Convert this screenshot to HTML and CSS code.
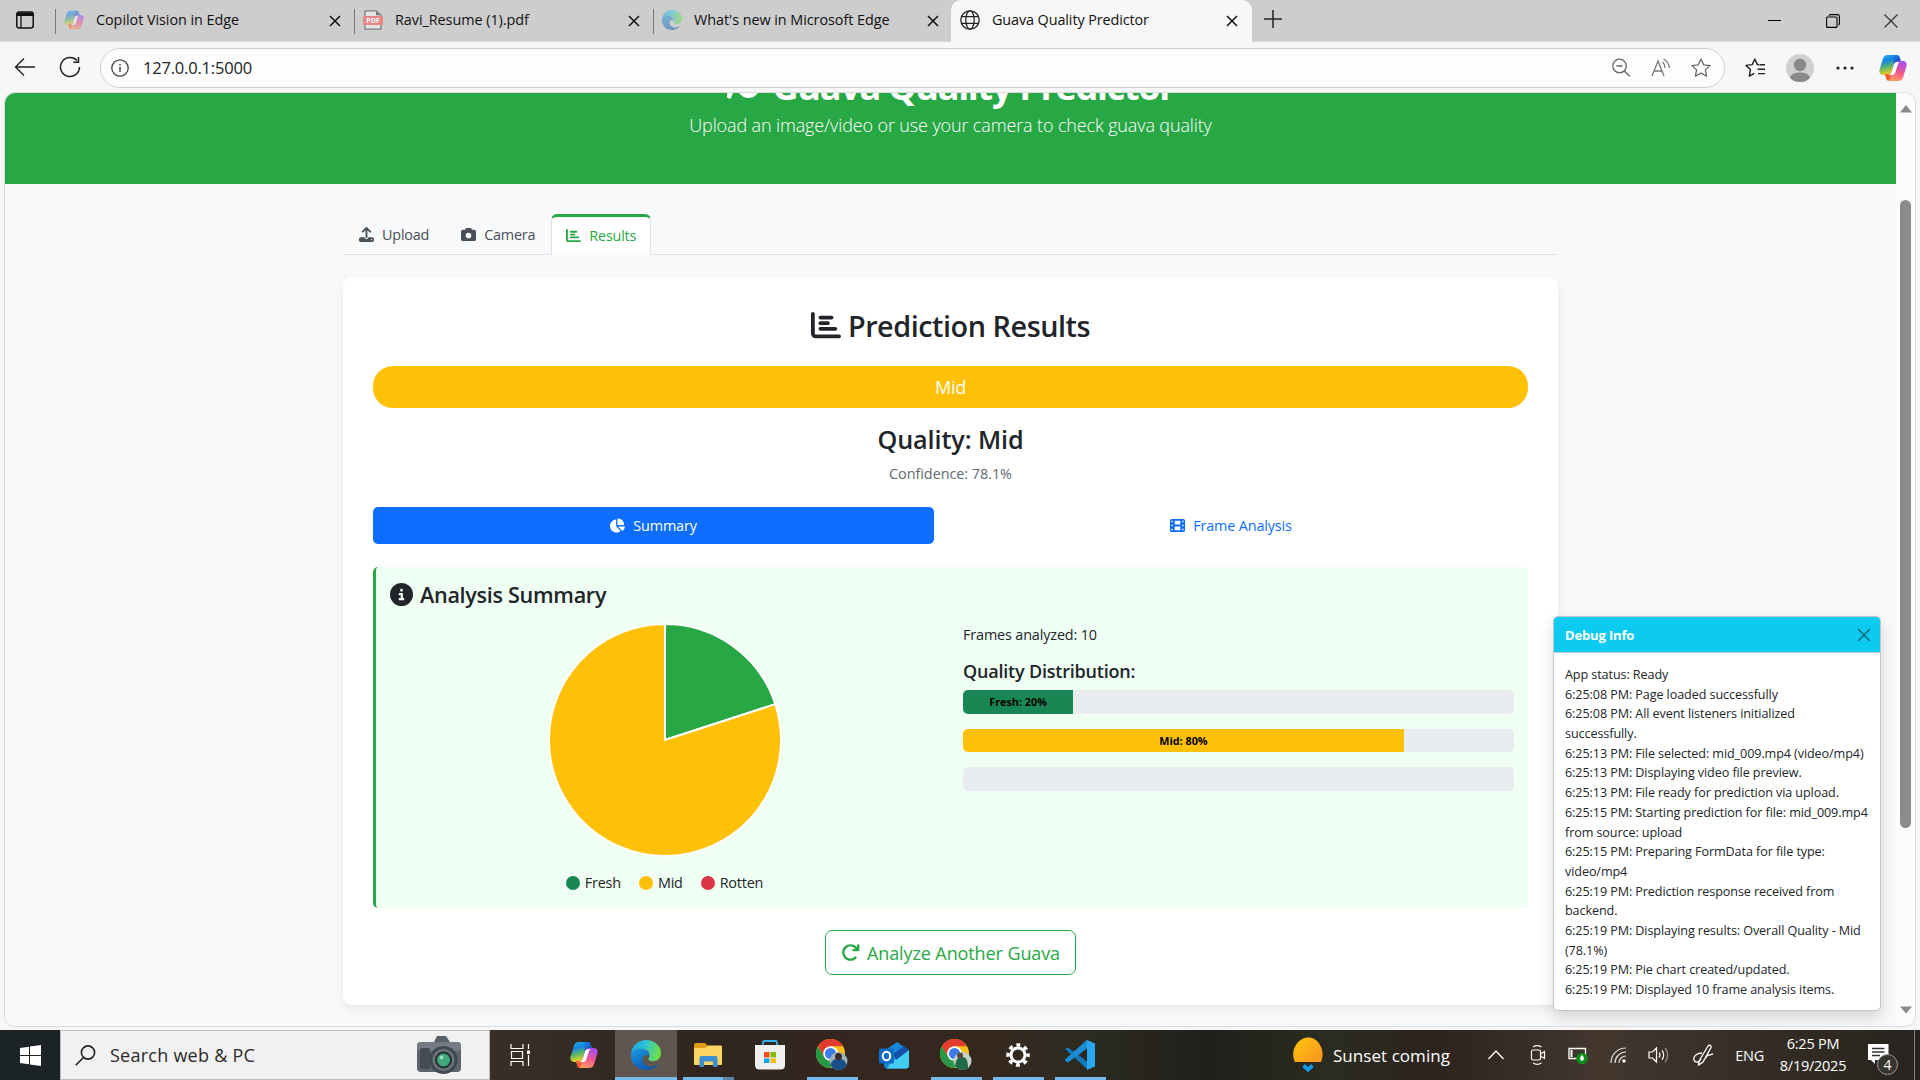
FILE: index.html
```html
<!DOCTYPE html>
<html lang="en">
<head>
<meta charset="utf-8">
<title>Guava Quality Predictor</title>
<link rel="stylesheet" href="styles.css">
</head>
<body>
<svg class="defs" width="0" height="0">
  <defs>
    <linearGradient id="cpA" x1="0" y1="0" x2="0.3" y2="1"><stop offset="0" stop-color="#22b4f0"/><stop offset=".35" stop-color="#1584e0"/><stop offset=".65" stop-color="#5fb86a"/><stop offset="1" stop-color="#f6d21c"/></linearGradient>
    <linearGradient id="cpB" x1="0.6" y1="0" x2="0.3" y2="1"><stop offset="0" stop-color="#a64df2"/><stop offset=".5" stop-color="#ee5590"/><stop offset="1" stop-color="#ffa35c"/></linearGradient>
    <linearGradient id="cpC" x1="0" y1="0" x2="1" y2="1"><stop offset="0" stop-color="#1d8be8"/><stop offset="1" stop-color="#1438b8"/></linearGradient>
    <linearGradient id="edA" x1="0" y1="0" x2="1" y2="0.2"><stop offset="0" stop-color="#1c9fe0"/><stop offset=".5" stop-color="#2fc3d8"/><stop offset="1" stop-color="#6be04c"/></linearGradient>
    <linearGradient id="edB" x1="0" y1="0" x2="0.6" y2="1"><stop offset="0" stop-color="#1b9de2"/><stop offset="1" stop-color="#0f56ad"/></linearGradient>
    <linearGradient id="sun" x1="0" y1="0" x2="1" y2="1"><stop offset="0" stop-color="#ffc60a"/><stop offset="1" stop-color="#f79420"/></linearGradient>
    <symbol id="copilot" viewBox="0 0 28 28">
      <path d="M9 1h8.500c2 0 2.700 1 3.300 2.800L22 8h-3c-2.500 0-3.600 1.200-4.200 3.200l-2 6.600c-.7 2-1.800 3.200-4.300 3.200H4.500C1 21-.2 18.500.6 15.500L4 4.500C4.800 2 6.400 1 9 1z" fill="url(#cpA)"/>
      <path d="M14 1h3.500c2 0 2.700 1 3.300 2.800L22 8h-3c-2.500 0-3.600 1.200-4.200 3.200z" fill="url(#cpC)"/>
      <path d="M19 27h-8.500c-2 0-2.700-1-3.300-2.800L6 20h3c2.500 0 3.600-1.200 4.200-3.200l2-6.600C15.900 8.200 17 7 19.500 7h4c3.500 0 4.700 2.500 3.900 5.500L24 23.500c-.8 2.500-2.400 3.500-5 3.500z" fill="url(#cpB)"/>
      <path d="M6 20h3c2.500 0 3.600-1.200 4.200-3.200L11 24.500c-.5 1.500-1 2.500-2.300 2.100-.8-.5-1.200-1.200-1.500-2.400z" fill="#f5602e"/>
      <path d="M14.800 11.200C15.400 9.200 16.500 8 19 8h1.500c-1 1-1.500 2-2 3.500L16.300 18.500C15.600 20.500 14.500 21 12 21H8.500c2.300 0 3.300-1.200 4.300-3.200z" fill="#fff"/>
    </symbol>
    <symbol id="edge" viewBox="0 0 30 30">
      <path d="M0 14C1 5 7.500 0 15 0c8.500 0 15 6 15 13 0 5-3.600 8.200-8 8.200-3 0-5-1.200-4.600-2.400 2.600-3.200 1-9.300-5.600-9.800C6 8.600 2 11 0 14z" fill="url(#edA)"/>
      <path d="M0 15C.5 10 5 8 10.500 8.500c5 .5 7.800 4 7.200 8-2-2.300-5.700-1.600-6.200 2-.5 4.500 4 8.500 9 8 3.500-.3 5.500-2 6.500-2C24 28.500 19.500 30 15 30 6 30-.4 23 0 15z" fill="url(#edB)"/>
    </symbol>
    <symbol id="bars" viewBox="0 0 512 512"><path fill="currentColor" d="M32 32c17.700 0 32 14.300 32 32V400c0 8.800 7.200 16 16 16H480c17.700 0 32 14.300 32 32s-14.300 32-32 32H80c-44.200 0-80-35.800-80-80V64C0 46.300 14.300 32 32 32zm96 96c0-17.700 14.300-32 32-32l192 0c17.700 0 32 14.300 32 32s-14.300 32-32 32l-192 0c-17.700 0-32-14.300-32-32zm32 64H288c17.700 0 32 14.300 32 32s-14.300 32-32 32H160c-17.700 0-32-14.300-32-32s14.300-32 32-32zm0 96H416c17.700 0 32 14.300 32 32s-14.300 32-32 32H160c-17.700 0-32-14.300-32-32s14.300-32 32-32z"/></symbol>
    <symbol id="closeTab" viewBox="0 0 12 12"><path d="M1 1l10 10M11 1L1 11" stroke="#111" stroke-width="1.500" fill="none"/></symbol>
    <symbol id="chrome" viewBox="0 0 30 30">
      <circle cx="15" cy="15" r="15" fill="#fbc116"/>
      <path d="M2 7.500A15 15 0 0 1 28 7.500H15L8.500 18.700z" fill="#e33b2e"/>
      <path d="M2 7.500A15 15 0 0 0 15 30l6.500-11.300H8.500z" fill="#279847"/>
      <circle cx="15" cy="15" r="7.500" fill="#fff"/><circle cx="15" cy="15" r="5.800" fill="#3b7ded"/>
    </symbol>
  </defs>
</svg>
<div class="screen">
  <div class="tabstrip">
    <svg class="tabmenu" width="18" height="18" viewBox="0 0 18 18"><rect x=".8" y="1" width="16.400" height="16" rx="2.500" fill="none" stroke="#111" stroke-width="1.500"/><path d="M1 1.500h16V5H1z" fill="#111"/><path d="M5 5v12" stroke="#111" stroke-width="1.300"/></svg>
    <div class="tab first"><svg class="fav faded" width="20" height="20"><use href="#copilot"/></svg><span class="t">Copilot Vision in Edge</span><svg class="x" width="12" height="12"><use href="#closeTab"/></svg></div>
    <div class="tab"><svg class="fav" width="20" height="20" viewBox="0 0 20 20"><path d="M2 .8h11l5 4.500v13.900H2z" fill="#e4e4e4" stroke="#7c7c7c" stroke-width="1.300"/><path d="M13 .8v4.500h5z" fill="#777"/><rect x="0" y="6" width="20" height="9" rx="1" fill="#e78888"/><text x="10" y="13" class="pdf">PDF</text></svg><span class="t">Ravi_Resume (1).pdf</span><svg class="x" width="12" height="12"><use href="#closeTab"/></svg></div>
    <div class="tab"><svg class="fav faded" width="20" height="20"><use href="#edge"/></svg><span class="t">What's new in Microsoft Edge</span><svg class="x" width="12" height="12"><use href="#closeTab"/></svg></div>
    <div class="tab active"><svg class="fav" width="20" height="20" viewBox="0 0 20 20" fill="none" stroke="#222" stroke-width="1.300"><circle cx="10" cy="10" r="9.200"/><ellipse cx="10" cy="10" rx="4.200" ry="9.200"/><path d="M1.500 6.700h17M1.500 13.300h17"/></svg><span class="t">Guava Quality Predictor</span><svg class="x" width="12" height="12"><use href="#closeTab"/></svg></div>
    <svg class="plus" width="18" height="18" viewBox="0 0 18 18"><path d="M9 0v18M0 9h18" stroke="#222" stroke-width="1.500"/></svg>
    <div class="wincontrols">
      <svg width="14" height="14" viewBox="0 0 14 14"><path d="M0 6.500h13" stroke="#000"/></svg>
      <svg width="14" height="14" viewBox="0 0 14 14" fill="none" stroke="#000" stroke-width="1.100"><rect x=".6" y="3" width="10.400" height="10.400" rx="1"/><path d="M3 1.800C3 1 3.500.6 4.500.6h7c1.300 0 1.900.6 1.900 1.900v7c0 1-.4 1.500-1.200 1.500"/></svg>
      <svg width="14" height="14" viewBox="0 0 14 14"><path d="M.5.500l13 13M13.500.500l-13 13" stroke="#333" stroke-width="1.200"/></svg>
    </div>
  </div>
  <div class="toolbar">
    <svg class="back" width="22" height="20" viewBox="0 0 22 20" fill="none" stroke="#222" stroke-width="1.400"><path d="M21 10H1.500M10 1.500 1.500 10l8.500 8.500"/></svg>
    <svg class="reload" width="22" height="22" viewBox="0 0 22 22" fill="none" stroke="#222" stroke-width="1.500"><path d="M20.500 11A9.500 9.500 0 1 1 18 4.600M19.500 1v5.300h-5.300"/></svg>
    <div class="address">
      <svg width="18" height="18" viewBox="0 0 18 18" fill="none" stroke="#444" stroke-width="1.300"><circle cx="9" cy="9" r="8.200"/><path d="M9 8v5M9 5v1.500" stroke-width="1.500"/></svg>
      <span class="url t">127.0.0.1:5000</span>
      <svg class="push" width="20" height="20" viewBox="0 0 20 20" fill="none" stroke="#666" stroke-width="1.300"><circle cx="8.500" cy="8" r="6.800"/><path d="M5.500 8h6M13.300 13l5.500 5.500"/></svg>
      <svg width="20" height="20" viewBox="0 0 20 20" fill="none" stroke="#777" stroke-width="1.300"><path d="M1 18 7 3l6 15M3 13h8M11.500 4c1.800 1.500 2.500 3.500 2.500 6M12.500 1c3.500 2 5.500 5 6 9"/></svg>
      <svg width="20" height="20" viewBox="0 0 20 20" fill="none" stroke="#666" stroke-width="1.300" stroke-linejoin="round"><path d="M10 1l2.700 5.800 6.300.8-4.600 4.300 1.200 6.300L10 15.100l-5.600 3.100 1.200-6.300L1 7.600l6.300-.8z"/></svg>
    </div>
    <svg class="favs" width="21" height="20" viewBox="0 0 21 20" fill="none" stroke="#222" stroke-width="1.400" stroke-linejoin="round"><path d="M14 6.800 12.400 6.600 9.800 1 7.200 6.600 1 7.400l4.500 4.300-1.200 6.500 5-2.800M14.500 6.800H20M12.500 11.200H20M13 15.600h7"/></svg>
    <svg class="avatar" width="28" height="28" viewBox="0 0 28 28"><circle cx="14" cy="14" r="14" fill="#d2d0ce"/><circle cx="14" cy="11" r="6.200" fill="#8a8886"/><path d="M4 24c1-4 5-5.500 10-5.500S23 20 24 24a14 14 0 0 1-20 0z" fill="#8a8886"/></svg>
    <svg class="dots" width="18" height="4" viewBox="0 0 18 4" fill="#222"><circle cx="2" cy="2" r="1.600"/><circle cx="9" cy="2" r="1.600"/><circle cx="16" cy="2" r="1.600"/></svg>
    <svg class="cop" width="28" height="28"><use href="#copilot"/></svg>
  </div>

  <div class="viewport">
    <div class="page">
      <header class="hero">
        <h1><svg width="34" height="34" viewBox="0 0 34 34" fill="none" stroke="#fff" stroke-width="5"><circle cx="21.500" cy="20" r="8.500"/><path d="M1 31 6 20"/></svg><span class="t">Guava Quality Predictor</span></h1>
        <p class="t">Upload an image/video or use your camera to check guava quality</p>
      </header>
      <main class="container">
        <nav class="navtabs">
          <a class="navtab"><svg class="ic" viewBox="0 0 512 512"><path fill="currentColor" d="M288 109.300V352c0 17.700-14.300 32-32 32s-32-14.300-32-32V109.300l-73.400 73.400c-12.500 12.500-32.800 12.500-45.300 0s-12.500-32.800 0-45.300l128-128c12.500-12.500 32.800-12.500 45.300 0l128 128c12.500 12.500 12.500 32.800 0 45.300s-32.800 12.500-45.300 0L288 109.300zM64 352H192c0 35.300 28.700 64 64 64s64-28.700 64-64H448c35.300 0 64 28.700 64 64v32c0 35.300-28.700 64-64 64H64c-35.300 0-64-28.700-64-64V416c0-35.300 28.700-64 64-64zM432 456a24 24 0 1 0 0-48 24 24 0 1 0 0 48z"/></svg><span class="t">Upload</span></a>
          <a class="navtab cam"><svg class="ic" viewBox="0 0 512 512"><path fill="currentColor" d="M149.100 64.800L138.700 96H64C28.700 96 0 124.700 0 160V416c0 35.300 28.700 64 64 64H448c35.300 0 64-28.700 64-64V160c0-35.300-28.700-64-64-64H373.300L362.900 64.800C356.400 45.200 338.100 32 317.400 32H194.600c-20.700 0-39 13.200-45.500 32.800zM256 192a96 96 0 1 1 0 192 96 96 0 1 1 0-192z"/></svg><span class="t">Camera</span></a>
          <a class="navtab on"><svg class="ic"><use href="#bars"/></svg><span class="t">Results</span></a>
        </nav>
        <section class="card">
          <h2><svg width="30" height="30"><use href="#bars"/></svg><span class="t">Prediction Results</span></h2>
          <div class="badge"><span class="t">Mid</span></div>
          <h3><span class="t">Quality: Mid</span></h3>
          <p class="conf"><span class="t">Confidence: 78.1%</span></p>
          <div class="pills">
            <a class="pill on"><svg class="ic" viewBox="32 0 544 512"><path fill="currentColor" d="M304 240V16.600c0-9 7-16.600 16-16.600C443.700 0 544 100.300 544 224c0 9-7.600 16-16.600 16H304zM32 272C32 150.700 122.100 50.300 239 34.300c9.200-1.300 17 6.100 17 15.400V288L412.500 444.500c6.700 6.700 6.200 17.700-1.500 23.100C371.800 495.600 323.800 512 272 512C139.500 512 32 404.600 32 272zm526.400 16c9.300 0 16.600 7.800 15.400 17c-7.700 55.900-34.600 105.600-73.900 142.300c-6 5.600-15.400 5.200-21.200-.7L320 288H558.400z"/></svg><span class="t">Summary</span></a>
            <a class="pill"><svg class="ic" viewBox="0 0 512 512"><path fill="currentColor" fill-rule="evenodd" d="M64 32H448a64 64 0 0 1 64 64V416a64 64 0 0 1-64 64H64a64 64 0 0 1-64-64V96a64 64 0 0 1 64-64zM48 96h48v48H48zM48 232h48v48H48zM48 368h48v48H48zM416 96h48v48h-48zM416 232h48v48h-48zM416 368h48v48h-48zM160 96h192v128H160zM160 288h192v128H160z"/></svg><span class="t">Frame Analysis</span></a>
          </div>
          <div class="summary">
            <h4><svg width="23" height="23" viewBox="0 0 512 512"><path fill="currentColor" d="M256 512A256 256 0 1 0 256 0a256 256 0 1 0 0 512zM216 336h24V272H216c-13.300 0-24-10.700-24-24s10.700-24 24-24h48c13.300 0 24 10.700 24 24v88h8c13.300 0 24 10.700 24 24s-10.700 24-24 24H216c-13.300 0-24-10.700-24-24s10.700-24 24-24zm40-208a32 32 0 1 1 0 64 32 32 0 1 1 0-64z"/></svg><span class="t">Analysis Summary</span></h4>
            <div class="cols">
              <div class="col chart">
                <svg width="234" height="234" viewBox="-117 -117 234 234" stroke="#fff" stroke-width="2" stroke-linejoin="round"><path d="M0 0V-116A116 116 0 0 1 110.320-35.850z" fill="#28a745"/><path d="M0 0L110.320-35.850A116 116 0 1 1 0-116z" fill="#ffc107"/></svg>
                <div class="legend"><span><i class="fresh"></i><span class="t">Fresh</span></span><span><i class="mid"></i><span class="t">Mid</span></span><span><i class="rotten"></i><span class="t">Rotten</span></span></div>
              </div>
              <div class="col">
                <p class="frames"><span class="t">Frames analyzed: 10</span></p>
                <h5><span class="t">Quality Distribution:</span></h5>
                <div class="bar"><div class="fill fresh" style="width:20%"><span class="t">Fresh: 20%</span></div></div>
                <div class="bar"><div class="fill mid" style="width:80%"><span class="t">Mid: 80%</span></div></div>
                <div class="bar"></div>
              </div>
            </div>
          </div>
          <a class="again"><svg width="19" height="19" viewBox="0 0 512 512"><path fill="currentColor" d="M386.300 160H336c-17.700 0-32 14.300-32 32s14.300 32 32 32H464c17.700 0 32-14.300 32-32V64c0-17.700-14.300-32-32-32s-32 14.300-32 32v51.200L414.400 97.600c-87.500-87.500-229.300-87.500-316.800 0s-87.500 229.300 0 316.800s229.300 87.500 316.800 0c12.500-12.500 12.500-32.800 0-45.300s-32.800-12.500-45.300 0c-62.500 62.500-163.800 62.500-226.300 0s-62.500-163.800 0-226.300s163.800-62.500 226.300 0L386.300 160z"/></svg><span class="t">Analyze Another Guava</span></a>
        </section>
      </main>
    </div>
    <div class="scroll">
      <svg width="12" height="8" viewBox="0 0 12 8"><path d="M6 0l6 7.500H0z" fill="#8a8a8a"/></svg>
      <div class="thumb"></div>
      <svg width="12" height="8" viewBox="0 0 12 8"><path d="M6 7.500L12 .500H0z" fill="#8a8a8a"/></svg>
    </div>
    <aside class="debug">
      <div class="dhead"><b class="t">Debug Info</b><svg width="14" height="14" viewBox="0 0 14 14"><path d="M1 1l12 12M13 1L1 13" stroke="#076579" stroke-width="1.500"/></svg></div>
      <div class="dbody">
        <div>App status: Ready</div>
        <div>6:25:08 PM: Page loaded successfully</div>
        <div>6:25:08 PM: All event listeners initialized<br>successfully.</div>
        <div>6:25:13 PM: File selected: mid_009.mp4 (video/mp4)</div>
        <div>6:25:13 PM: Displaying video file preview.</div>
        <div>6:25:13 PM: File ready for prediction via upload.</div>
        <div>6:25:15 PM: Starting prediction for file: mid_009.mp4<br>from source: upload</div>
        <div>6:25:15 PM: Preparing FormData for file type:<br>video/mp4</div>
        <div>6:25:19 PM: Prediction response received from<br>backend.</div>
        <div>6:25:19 PM: Displaying results: Overall Quality - Mid<br>(78.1%)</div>
        <div>6:25:19 PM: Pie chart created/updated.</div>
        <div>6:25:19 PM: Displayed 10 frame analysis items.</div>
      </div>
    </aside>
  </div>

  <div class="taskbar">
    <div class="start"><svg width="21" height="21" viewBox="0 0 21 21" fill="#fff"><path d="M0 3l9-1.300V10H0zM10 1.500 21 0v10H10zM0 11h9v8.300L0 18zM10 11h11v10l-11-1.500z"/></svg></div>
    <div class="search">
      <svg width="21" height="21" viewBox="0 0 21 21" fill="none" stroke="#222" stroke-width="1.600"><circle cx="13" cy="7.500" r="6.600"/><path d="M8.500 12.500.700 20.300"/></svg>
      <span class="t">Search web &amp; PC</span>
      <svg class="photo" width="46" height="40" viewBox="0 0 46 40"><path d="M18 7l3-6h9l4 6z" fill="#5a6068"/><rect x="1" y="7" width="44" height="30" rx="4" fill="#5c636c"/><rect x="1" y="7" width="44" height="9" rx="4" fill="#747b84"/><rect x="4" y="13" width="10" height="21" rx="2" fill="#444b54"/><circle cx="27.500" cy="25" r="14" fill="#41474f"/><circle cx="27.500" cy="25" r="11" fill="#6c737b"/><circle cx="27.500" cy="25" r="8.500" fill="#23302f"/><circle cx="27.500" cy="25" r="6.500" fill="#45a57a"/><circle cx="25.500" cy="22.500" r="2" fill="#8fe0b8"/></svg>
    </div>
    <div class="app tv"><svg width="21" height="22" viewBox="0 0 21 22" fill="none" stroke="#fff" stroke-width="1.200"><path d="M1 0v4.500h12V0M1 22v-4.500h12V22M1.500 7.500h11v7h-11zM18.500 0v5M18.500 11v11"/><path d="M17 6.500h3v3.500h-3z" fill="#fff" stroke="none"/></svg></div>
    <div class="app"><svg width="28" height="28"><use href="#copilot"/></svg></div>
    <div class="app cur"><svg width="30" height="30"><use href="#edge"/></svg></div>
    <div class="app run dual"><svg width="28" height="24" viewBox="0 0 28 24"><path d="M0 2C0 .8.800 0 2 0h9l3 3-3 4H0z" fill="#e09b10"/><path d="M1 5h10l3-2.500h12.500c1 0 1.500.5 1.500 1.500v16.500c0 1-.5 1.500-1.500 1.500h-25C.500 22 0 21.500 0 20.500V6z" fill="#fcd462"/><path d="M5.500 24V15c0-1.200.8-2 2-2h14c1.200 0 2 .8 2 2v9h-4.500v-5.500h-9V24z" fill="#3c8fd0"/></svg></div>
    <div class="app"><svg width="30" height="30" viewBox="0 0 30 30"><path d="M8 6V2.500C8 1.500 8.500 1 9.500 1h11c1 0 1.500.5 1.500 1.500V6" fill="none" stroke="#35b2ec" stroke-width="1.800"/><path d="M0 5h30v20c0 3-1.500 4.500-4.500 4.500h-21C1.500 29.500 0 28 0 25z" fill="#efefef"/><path d="M9 12h5.500v5.500H9z" fill="#f1511b"/><path d="M15.500 12H21v5.500h-5.500z" fill="#80bc06"/><path d="M9 18.500h5.500V23H9z" fill="#05a6f0"/><path d="M15.500 18.500H21V23h-5.500z" fill="#ffba08"/></svg></div>
    <div class="app run"><svg width="32" height="32" viewBox="0 0 32 32"><use href="#chrome" width="29" height="29"/><circle cx="22.500" cy="22" r="9" fill="#9db0bb"/><path d="M14.500 26c1-5 4-6 8-6s7 1 8 6a9 9 0 0 1-16 0z" fill="#17508a"/><circle cx="22.500" cy="17.500" r="3.500" fill="#3a2b25"/></svg></div>
    <div class="app"><svg width="30" height="27" viewBox="0 0 30 27"><path d="M5 9 18 0l12 8v15c0 2-1 3.500-3 3.500H8c-2 0-3-1.500-3-3.500z" fill="#1b87d8"/><path d="M12 20 30 8v15c0 2-1 3.500-3 3.500H8z" fill="#42cdf3"/><path d="M14 12 25 4l5 4-13 10z" fill="#1650a8"/><rect x="0" y="6.500" width="15" height="15" rx="1.500" fill="#0f6cc4"/><ellipse cx="7.500" cy="14" rx="3.700" ry="4.200" fill="none" stroke="#fff" stroke-width="2"/></svg></div>
    <div class="app run"><svg width="32" height="32" viewBox="0 0 32 32"><use href="#chrome" width="29" height="29"/><circle cx="22.500" cy="22" r="9" fill="#c5d0c6"/><path d="M15 27c1-7 3-9 7-9s6 3 6 11a9 9 0 0 1-13-2z" fill="#206a48"/><circle cx="20" cy="16.500" r="3" fill="#5b4b41"/></svg></div>
    <div class="app run"><svg width="24" height="24" viewBox="0 0 24 24" fill="none" stroke="#fff"><circle cx="12" cy="12" r="7" stroke-width="3"/><circle cx="12" cy="12" r="10" stroke-width="3.500" stroke-dasharray="3.900 3.954" stroke-dashoffset="1.950"/></svg></div>
    <div class="app run"><svg width="30" height="30" viewBox="0 0 30 30"><path d="M22 0 9 12 3 7.500 0 9v0l22 20z" fill="#1279bd"/><path d="M0 21l3 1.500L22 8V0L0 19.500z" fill="#1b8fd6"/><path d="M22 0l8 3.500v23L22 30z" fill="#2aa7ef"/><path d="M22 8.500v13L13.500 15z" fill="#2a2620"/></svg></div>
    <div class="tray">
      <svg class="sunset" width="30" height="38" viewBox="0 0 30 38"><path d="M2 26C-1 20 0 13 3 9 9-1 22-1 27 9c3 5 3.500 11 1 17z" fill="url(#sun)"/><path d="M10.500 29.500l4.500 4 4.500-4" fill="none" stroke="#1697e8" stroke-width="4"/></svg>
      <span class="weather t">Sunset coming</span>
      <svg class="caret" width="16" height="10" viewBox="0 0 16 10"><path d="M.5 9 8 1l7.500 8" fill="none" stroke="#fff" stroke-width="1.300"/></svg>
      <svg class="meet" width="16" height="20" viewBox="0 0 16 20" fill="none" stroke="#fff" stroke-width="1.200"><rect x="1.500" y="5" width="9" height="10" rx="1.500"/><path d="M10.500 9l4-2.500v7l-4-2.500M3 2c2.500-1.500 6-1.500 8.500 0M3 18c2.500 1.500 6 1.500 8.500 0"/></svg>
      <svg class="batt" width="20" height="20" viewBox="0 0 20 20"><path d="M1 3.500h16.500v10H1z" fill="none" stroke="#fff" stroke-width="1.300"/><path d="M2.500 5h2v7h-2z" fill="#fff"/><circle cx="14" cy="13.500" r="5.800" fill="#0f8a1c"/><path d="M14 10c2.500 2 2.500 5 0 6-2.500-1-2.500-4 0-6z" fill="#fff"/></svg>
      <svg class="wifi" width="18" height="18" viewBox="0 0 18 18" fill="none" stroke="#ddd" stroke-width="1.200"><path d="M1 17C1 8 8 2 16 2M5 17c0-6 5-11 11-11M9 17c0-4 3-7 7-7"/><circle cx="14" cy="15" r="1.700" fill="#fff" stroke="none"/></svg>
      <svg class="vol" width="21" height="18" viewBox="0 0 21 18" fill="none" stroke="#fff" stroke-width="1.200"><path d="M1 6h3.500L8.500 2v14l-4-4H1zM11 6.500c1.200 1.500 1.200 3.500 0 5M14 4.500c2.200 2.500 2.200 6.500 0 9"/><path d="M17 2c3.500 4 3.500 10 0 14" stroke="#999"/></svg>
      <svg class="pen" width="21" height="22" viewBox="0 0 21 22" fill="none" stroke="#fff" stroke-width="1.300"><path d="M6 17 15 2c1-1.500 3.500-.5 3 1.500L10 18l-4.500 3zM9 9C3 9 0 13 1 16s5 3 7-1M12 14c2 0 1-3 4-3 2 0 3-1 4-1"/></svg>
      <span class="lang t">ENG</span>
      <div class="clock"><span class="t">6:25 PM</span><span class="t">8/19/2025</span></div>
      <div class="notif"><svg width="21" height="20" viewBox="0 0 21 20"><path d="M0 0h20.500v16H7v4l-4-4H0z" fill="#fff"/><path d="M4 4.500h12.500M4 8h12.500M4 11.500h8" stroke="#333" stroke-width="1.300"/></svg><span class="count">4</span></div>
      <div class="desk"></div>
    </div>
  </div>
</div>
</body>
</html>
```
FILE: styles.css
```css
* { box-sizing: border-box; }
body { margin: 0; background: #f7f7f7; font-family: "Open Sans", "Noto Sans", sans-serif; color: #212529; }
h1, h2, h3, h4, h5, p { margin: 0; font-weight: 600; }
.defs { position: absolute; }
svg { flex: none; display: block; }
.t { white-space: nowrap; }
.screen { width: 1920px; height: 1080px; display: flex; flex-direction: column; overflow: hidden; background: #f7f7f7; }

.tabstrip { height: 42px; background: #cdcdcd; display: flex; align-items: center; box-shadow: inset 0 -1px #d8d8d8; color: #111; }
.tabmenu { margin: 0 0 2px 16px; }
.tab { width: 299px; height: 42px; display: flex; align-items: center; padding: 0 13px 2px 8px; font-size: 14.400px; position: relative; }
.tab .t { margin-top: -2px; }
.tab:not(.active) .t { letter-spacing: -.050px; }
.tab::before { content: ""; width: 1px; height: 25px; background: #777; margin: 3px 8px 0 -8px; }
.tab.first { margin-left: 21px; }
.tab .fav { margin-right: 12px; }
.tab .x { margin-left: auto; margin-top: 2px; }
.faded { opacity: .5; }
.pdf { font: bold 7px "Open Sans", sans-serif; fill: #fff; text-anchor: middle; }
.tab.active { width: 301px; margin-left: -1px; background: #f7f7f7; border-radius: 10px 10px 0 0; padding-left: 9px; padding-right: 14px; }
.tab.active::before { display: none; }
.tab.active .t { letter-spacing: -.100px; }
.plus { margin: 0 0 4px 12px; }
.wincontrols { margin-left: auto; display: flex; gap: 44px; padding-right: 22px; }

.toolbar { height: 51px; display: flex; align-items: center; padding: 0 13px 0 14px; }
.back, .reload { margin-bottom: 1px; }
.reload { margin-left: 23px; }
.address { width: 1625px; height: 40px; margin: 1px 0 0 19px; border: 1px solid #cfcfcf; border-radius: 20px; background: #fdfdfd; display: flex; align-items: center; padding: 0 13px 1px 10px; }
.url { margin-left: 14px; font-size: 16.500px; letter-spacing: -.2px; color: #222; }
.address .push { margin-left: auto; }
.address svg + svg { margin-left: 20px; }
.favs { margin-left: 20px; }
.avatar { margin-left: 20px; }
.dots { margin-left: 22px; }
.cop { margin-left: auto; }

.viewport { height: 933px; margin: 0 5px; position: relative; display: flex; border-radius: 10px; overflow: hidden; background: #f8f9fa; box-shadow: 0 0 0 1px #dcdcdc; flex: none; }
.page { width: 1891px; background: #f8f9fb; }
.hero { height: 91px; background: #28a745; color: #fff; overflow: hidden; display: flex; flex-direction: column; align-items: center; }
.hero h1 { height: 50px; margin-top: -31px; display: flex; align-items: center; font-size: 36px; font-weight: 700; line-height: 50px; letter-spacing: -1.280px; }
.hero h1 svg { margin: -7px 12px 0 0; }
.hero p { font-size: 18px; line-height: 27px; font-weight: 300; letter-spacing: -.130px; }
.container { width: 1215px; margin: 30px auto 0; }
.navtabs { display: flex; height: 41px; border-bottom: 1px solid #dee2e6; font-size: 14.400px; letter-spacing: -.200px; color: #495057; }
.navtab { display: flex; align-items: center; height: 41px; padding: 0 16px; }
.ic { width: 15px; height: 15px; margin-right: 8px; }
.cam { padding-right: 16px; }
.navtab.on { width: 100px; padding: 0 14px 2px; background: #fff; color: #28a745; border: 1px solid #dee2e6; border-top: 3px solid #28a745; border-bottom: 0; border-radius: 6px 6px 0 0; }
.card { height: 728px; margin-top: 22px; background: #fff; border-radius: 9px; box-shadow: 0 4px 10px rgba(0,0,0,.07); padding: 27px 30px 0; display: flex; flex-direction: column; }
.card h2 { height: 42px; display: flex; align-items: center; justify-content: center; gap: 7px; font-size: 28.800px; letter-spacing: -.460px; }
.badge { height: 42px; margin-top: 20px; border-radius: 20px; background: #ffc107; color: #fff; font-size: 18px; letter-spacing: -.300px; padding-bottom: 1px; display: flex; align-items: center; justify-content: center; }
.card h3 { height: 36px; line-height: 36px; margin-top: 13px; text-align: center; font-size: 25.200px; letter-spacing: -.100px; }
.conf { margin-top: 6px; height: 22px; line-height: 22px; text-align: center; font-size: 14.400px; letter-spacing: -.040px; color: #626a72; font-weight: 400; }
.pills { display: flex; margin-top: 22px; }
.pill { flex: 1; height: 37px; display: flex; align-items: center; justify-content: center; border-radius: 5px; color: #0d6efd; font-size: 14.400px; letter-spacing: -.150px; }
.pill.on { flex: none; width: 561px; background: #0d6efd; color: #fff; }
.summary { height: 341px; margin-top: 23px; border-left: 3px solid #28a745; border-radius: 5px; background: #f0fff4; padding: 13px 14px 0; }
.summary h4 { height: 29px; display: flex; align-items: center; gap: 7px; font-size: 21.600px; letter-spacing: -.300px; }
.cols { display: flex; gap: 22px; }
.col { flex: 1; }
.chart { display: flex; flex-direction: column; align-items: center; padding: 14px 2px 0 0; }
.cols .col:last-child { flex: none; width: 551px; }
.legend { display: flex; gap: 18px; margin-top: 15px; font-size: 14.400px; letter-spacing: -.200px; line-height: 22px; }
.legend > span { display: flex; align-items: center; }
.legend i { width: 14px; height: 14px; border-radius: 50%; margin-right: 5px; }
.fresh { background: #198754; }
.mid { background: #ffc107; }
.rotten { background: #dc3545; }
.frames { margin-top: 15px; font-size: 14.400px; line-height: 22px; font-weight: 400; letter-spacing: -.140px; }
.cols h5 { margin: 13px 0 7px; font-size: 18px; line-height: 24px; letter-spacing: -.200px; }
.bar { height: 23.500px; border-radius: 5px; background: #e9ecef; overflow: hidden; margin-bottom: 15px; }
.fill { height: 100%; display: flex; align-items: center; justify-content: center; font-size: 10.800px; font-weight: 700; color: #000; }
.again { align-self: center; width: 251px; height: 45px; margin-top: 22px; border: 1px solid #28a745; border-radius: 7px; color: #28a745; font-size: 18px; letter-spacing: -.100px; display: flex; align-items: center; justify-content: center; gap: 7px; }
.scroll { width: 19px; background: #fcfcfc; display: flex; flex-direction: column; align-items: center; padding: 12px 0 12px; }
.thumb { width: 11px; height: 628px; margin: 87px 0 auto; border-radius: 6px; background: #8b8b8b; }

.debug { position: absolute; left: 1548px; top: 523px; width: 328px; height: 395px; background: #fff; border: 1px solid #c4c6c8; border-radius: 5px; box-shadow: 0 7px 15px rgba(0,0,0,.15); overflow: hidden; }
.dhead { height: 36px; background: #0dcaf0; color: #fff; display: flex; align-items: center; justify-content: space-between; padding: 0 9px 0 11px; font-size: 13px; letter-spacing: -.150px; border-bottom: 1px solid #b9cdd2; }
.dbody { padding: 12px 11px; font-size: 12.600px; letter-spacing: -.090px; line-height: 19.690px; white-space: nowrap; }

.taskbar { height: 50px; margin-top: 4px; flex: none; display: flex; color: #fff; background: linear-gradient(90deg, #3a2f26 490px, #30251f 700px, #35281f 1000px, #2c2b20 1090px, #211f1b 1210px, #2b2c1f 1330px, #2c231e 1430px, #43372e 1600px, #332c24 1780px, #27231e); }
.start { width: 60px; background: #1c2326; display: flex; align-items: center; justify-content: center; }
.search { width: 430px; background: #f1f1f1; border: 1px solid #bdbdbd; display: flex; align-items: center; padding: 0 27px 0 14px; font-size: 18px; letter-spacing: .250px; color: #2b2b2b; }
.search .t { margin-left: 14px; }
.photo { margin-left: auto; }
.app { width: 62px; display: flex; align-items: center; justify-content: center; position: relative; }
.app.tv { width: 63px; padding-right: 2px; }
.app.cur { background: #605650; box-shadow: inset 0 -3px #76b9ed; }
.app.run::after { content: ""; position: absolute; bottom: 0; left: 6px; width: 51px; height: 3px; background: #76b9ed; }
.app.dual::after { background: linear-gradient(90deg, #76b9ed 40px, #5a86ab 40px); }
.tray { flex: 1; display: flex; align-items: center; font-size: 14.500px; letter-spacing: -.250px; }
.sunset { margin-left: 182px; }
.weather { font-size: 17px; letter-spacing: .050px; margin-left: 10px; }
.caret { margin-left: auto; }
.meet { margin-left: 26px; }
.batt { margin-left: 22px; }
.wifi { margin-left: 22px; }
.vol { margin-left: 20px; }
.pen { margin-left: 24px; }
.lang { margin-left: 21.500px; }
.clock { width: 84px; margin-left: 7px; display: flex; flex-direction: column; align-items: center; line-height: 22.500px; }
.notif { position: relative; width: 46px; margin: -2px 0 0 13px; height: 20px; }
.count { position: absolute; left: 9px; top: 10px; width: 21px; height: 21px; border: 1px solid #999; border-radius: 50%; background: #383430; font-size: 14px; line-height: 19px; text-align: center; }
.desk { width: 6px; align-self: stretch; border-left: 1px solid #8a857f; }
```
